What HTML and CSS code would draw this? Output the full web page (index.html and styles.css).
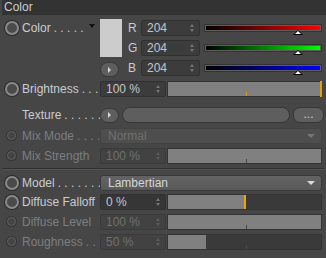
FILE: index.html
```html
<!DOCTYPE html>
<html lang="en">
<head>
    <meta charset="UTF-8">
    <title>Color</title>
    <link rel="stylesheet" href="styles.css">
</head>
<body>
    <div class="panel">
        <div class="head">Color</div>

        <div class="colorblock">
            <div class="label lb-color"><span class="radio"></span>Color <span class="dots">. . . . .</span><span class="drop"></span></div>
            <div class="swatch"></div>
            <div class="ch">R</div>
            <div class="num nf-rgb">204<span class="spin"></span></div>
            <div class="slide"><div class="track red"></div><span class="mark"></span></div>
            <div class="ch ch2">G</div>
            <div class="num nf-rgb nf2">204<span class="spin"></span></div>
            <div class="slide sl2"><div class="track green"></div><span class="mark"></span></div>
            <div class="play pl3"><span class="tri"></span></div>
            <div class="ch ch3">B</div>
            <div class="num nf-rgb nf3">204<span class="spin"></span></div>
            <div class="slide sl3"><div class="track blue"></div><span class="mark"></span></div>
        </div>

        <div class="row r-bright">
            <div class="label"><span class="radio"></span>Brightness <span class="dots">. . .</span></div>
            <div class="num">100 %<span class="spin"></span></div>
            <div class="bar"><div class="fill full"></div><span class="tick hot"></span><span class="edge"></span></div>
        </div>

        <div class="row r-tex">
            <div class="label">Texture <span class="dots">. . . . . .</span></div>
            <div class="play"><span class="tri"></span></div>
            <div class="pill"></div>
            <div class="more">...</div>
        </div>

        <div class="row r-mode off">
            <div class="label"><span class="radio small"></span>Mix Mode<span class="dots">. . . .</span></div>
            <div class="select dim">Normal<span class="arrow"></span></div>
        </div>

        <div class="row off">
            <div class="label"><span class="radio small"></span>Mix Strength</div>
            <div class="num">100 %<span class="spin"></span></div>
            <div class="bar"><div class="fill full"></div><span class="tick"></span></div>
        </div>

        <div class="sep"></div>

        <div class="row r-model">
            <div class="label"><span class="radio"></span>Model<span class="dots">. . . . . . .</span></div>
            <div class="select">Lambertian<span class="arrow"></span></div>
        </div>

        <div class="row r-fall">
            <div class="label"><span class="radio"></span>Diffuse Falloff</div>
            <div class="num dark">0 %<span class="spin"></span></div>
            <div class="bar"><div class="fill" style="width: 50%"></div><span class="cursor"></span></div>
        </div>

        <div class="row off">
            <div class="label"><span class="radio small"></span>Diffuse Level</div>
            <div class="num">100 %<span class="spin"></span></div>
            <div class="bar"><div class="fill full"></div><span class="tick"></span></div>
        </div>

        <div class="row off">
            <div class="label"><span class="radio small"></span>Roughness <span class="dots">. .</span></div>
            <div class="num">50 %<span class="spin"></span></div>
            <div class="bar"><div class="fill" style="width: 25%"></div><span class="tick"></span></div>
        </div>
    </div>
</body>
</html>
```

FILE: styles.css
```css
body {
    margin: 0;
    background-color: #464646;
    font-family: "Liberation Sans", Arial, sans-serif;
    font-size: 12px;
    color: #c9ccd2;
}

.panel {
    width: 326px;
    height: 258px;
    overflow: hidden;
}

.head {
    margin-left: 2px;
    height: 15px;
    line-height: 15px;
    padding-left: 2px;
    background-color: #333333;
    color: #c9ccd2;
}

/* color block */

.colorblock {
    display: grid;
    grid-template-columns: 100px 22px 19px 59px 121px;
    grid-template-rows: 16px 16px 16px;
    row-gap: 4px;
    margin-top: 5px;
}

.label {
    position: relative;
    display: flex;
    align-items: center;
    padding-left: 22px;
    height: 16px;
    white-space: nowrap;
}

.lb-color {
    grid-row: 1;
    grid-column: 1;
}

.dots {
    margin-left: 3px;
    white-space: pre;
}

.drop {
    position: absolute;
    left: 89px;
    top: 4px;
    border-left: 3px solid transparent;
    border-right: 3px solid transparent;
    border-top: 4px solid #111;
}

.radio {
    position: absolute;
    left: 5px;
    top: 1px;
    width: 10px;
    height: 10px;
    border-radius: 50%;
    background-color: #4a4a4a;
    border: 2px solid #8a8a8a;
    box-shadow: 0 0 0 1px #2c2c2c;
}

.radio.small {
    left: 7px;
    top: 3px;
    width: 7px;
    height: 7px;
    border: 1px solid #626262;
    background-color: #444;
    box-shadow: 0 0 0 1px #363636;
}

.swatch {
    grid-row: 1 / 3;
    grid-column: 2;
    margin-top: -1px;
    height: 38px;
    background-color: #cccccc;
}

.ch {
    grid-column: 3;
    grid-row: 1;
    padding-left: 6px;
    line-height: 16px;
}

.ch2 { grid-row: 2; }
.ch3 { grid-row: 3; }

.nf-rgb {
    grid-column: 4;
    grid-row: 1;
}

.nf2 { grid-row: 2; }
.nf3 { grid-row: 3; }

.slide {
    grid-column: 5;
    grid-row: 1;
    position: relative;
    margin-left: 5px;
}

.sl2 { grid-row: 2; }
.sl3 { grid-row: 3; }

.track {
    margin-top: 5px;
    height: 4px;
    border: 1px solid #5e5e5e;
    box-shadow: 0 0 0 1px #333;
}

.red { background: linear-gradient(to right, #000, #ff0000); }
.green { background: linear-gradient(to right, #000, #00ff00); }
.blue { background: linear-gradient(to right, #000, #0000ff); }

.mark {
    position: absolute;
    left: 88px;
    top: 10px;
    border-left: 5px solid transparent;
    border-right: 5px solid transparent;
    border-bottom: 5px solid #000;
}

.mark::after {
    content: "";
    position: absolute;
    left: -3px;
    top: 1px;
    border-left: 3px solid transparent;
    border-right: 3px solid transparent;
    border-bottom: 3px solid #fff;
}

.pl3 {
    grid-column: 2;
    grid-row: 3;
    margin-top: 2px;
}

/* rows */

.row {
    display: flex;
    align-items: center;
    height: 16px;
    margin-top: 4px;
}

.row > .label {
    width: 78px;
    flex: none;
}

.r-bright { margin-top: 5px; }
.r-tex { margin-top: 10px; }
.r-mode { margin-top: 5px; }
.r-model { margin-top: 5px; }
.r-fall { margin-top: 3px; }

.num {
    position: relative;
    box-sizing: border-box;
    width: 66px;
    height: 16px;
    line-height: 15px;
    padding-left: 5px;
    background-color: #3c3c3c;
    border: 1px solid #313131;
    border-radius: 2px;
    color: #c2c6cc;
}

.num.nf-rgb {
    width: 59px;
}

.num.dark {
    background-color: #363636;
}

.spin {
    position: absolute;
    right: 4px;
    top: 3px;
    width: 5px;
    height: 8px;
}

.spin::before,
.spin::after {
    content: "";
    position: absolute;
    left: 0;
    border-left: 2.5px solid transparent;
    border-right: 2.5px solid transparent;
}

.spin::before {
    top: 0;
    border-bottom: 3px solid #767676;
}

.spin::after {
    bottom: 0;
    border-top: 3px solid #767676;
}

.bar {
    position: relative;
    flex: 1;
    height: 16px;
    margin-left: 1px;
    margin-right: 4px;
    background-color: #3a3a3a;
    border: 1px solid #333;
    box-sizing: border-box;
}

.fill {
    height: 100%;
    background-color: #808080;
}

.fill.full {
    width: 100%;
}

.tick {
    position: absolute;
    left: 78px;
    bottom: 0;
    width: 1px;
    height: 4px;
    background-color: #4a4a4a;
}

.tick.hot {
    background-color: #d9961e;
}

.edge {
    position: absolute;
    right: -1px;
    top: -1px;
    bottom: -1px;
    width: 2px;
    background-color: #e79d10;
}

.cursor {
    position: absolute;
    left: 76px;
    top: 0;
    bottom: 0;
    width: 2px;
    background-color: #f0a010;
}

.play {
    box-sizing: border-box;
    width: 19px;
    height: 15px;
    border-radius: 8px;
    background-color: #5e5e5e;
    border: 1px solid #363636;
    display: flex;
    align-items: center;
    justify-content: center;
}

.tri {
    border-top: 3px solid transparent;
    border-bottom: 3px solid transparent;
    border-left: 3px solid #d8d8d8;
}

.pill {
    box-sizing: border-box;
    width: 168px;
    height: 16px;
    margin-left: 3px;
    border-radius: 8px;
    background-color: #5e5e5e;
    border: 1px solid #363636;
}

.more {
    box-sizing: border-box;
    width: 31px;
    height: 16px;
    margin-left: 3px;
    border-radius: 7px;
    background-color: #5e5e5e;
    border: 1px solid #363636;
    text-align: center;
    line-height: 12px;
    color: #d0d0d0;
}

.select {
    position: relative;
    box-sizing: border-box;
    width: 222px;
    height: 16px;
    line-height: 14px;
    padding-left: 7px;
    background: linear-gradient(#636363, #595959);
    border: 1px solid #393939;
    border-radius: 3px;
    color: #d4d6dc;
}

.select.dim {
    background: #4e4e4e;
    border-color: #434343;
    color: #6e6e6e;
}

.arrow {
    position: absolute;
    right: 6px;
    top: 5px;
    border-left: 4px solid transparent;
    border-right: 4px solid transparent;
    border-top: 4px solid #dcdcdc;
}

.select.dim .arrow {
    border-top-color: #777;
}

.off {
    color: #7c7e82;
}

.off .num {
    color: #707070;
    background-color: #424242;
    border-color: #3a3a3a;
}

.off .spin::before { border-bottom-color: #5c5c5c; }
.off .spin::after { border-top-color: #5c5c5c; }

.sep {
    margin: 4px 2px 0 2px;
    height: 1px;
    background-color: #2f2f2f;
    border-bottom: 1px solid #555;
}
```
